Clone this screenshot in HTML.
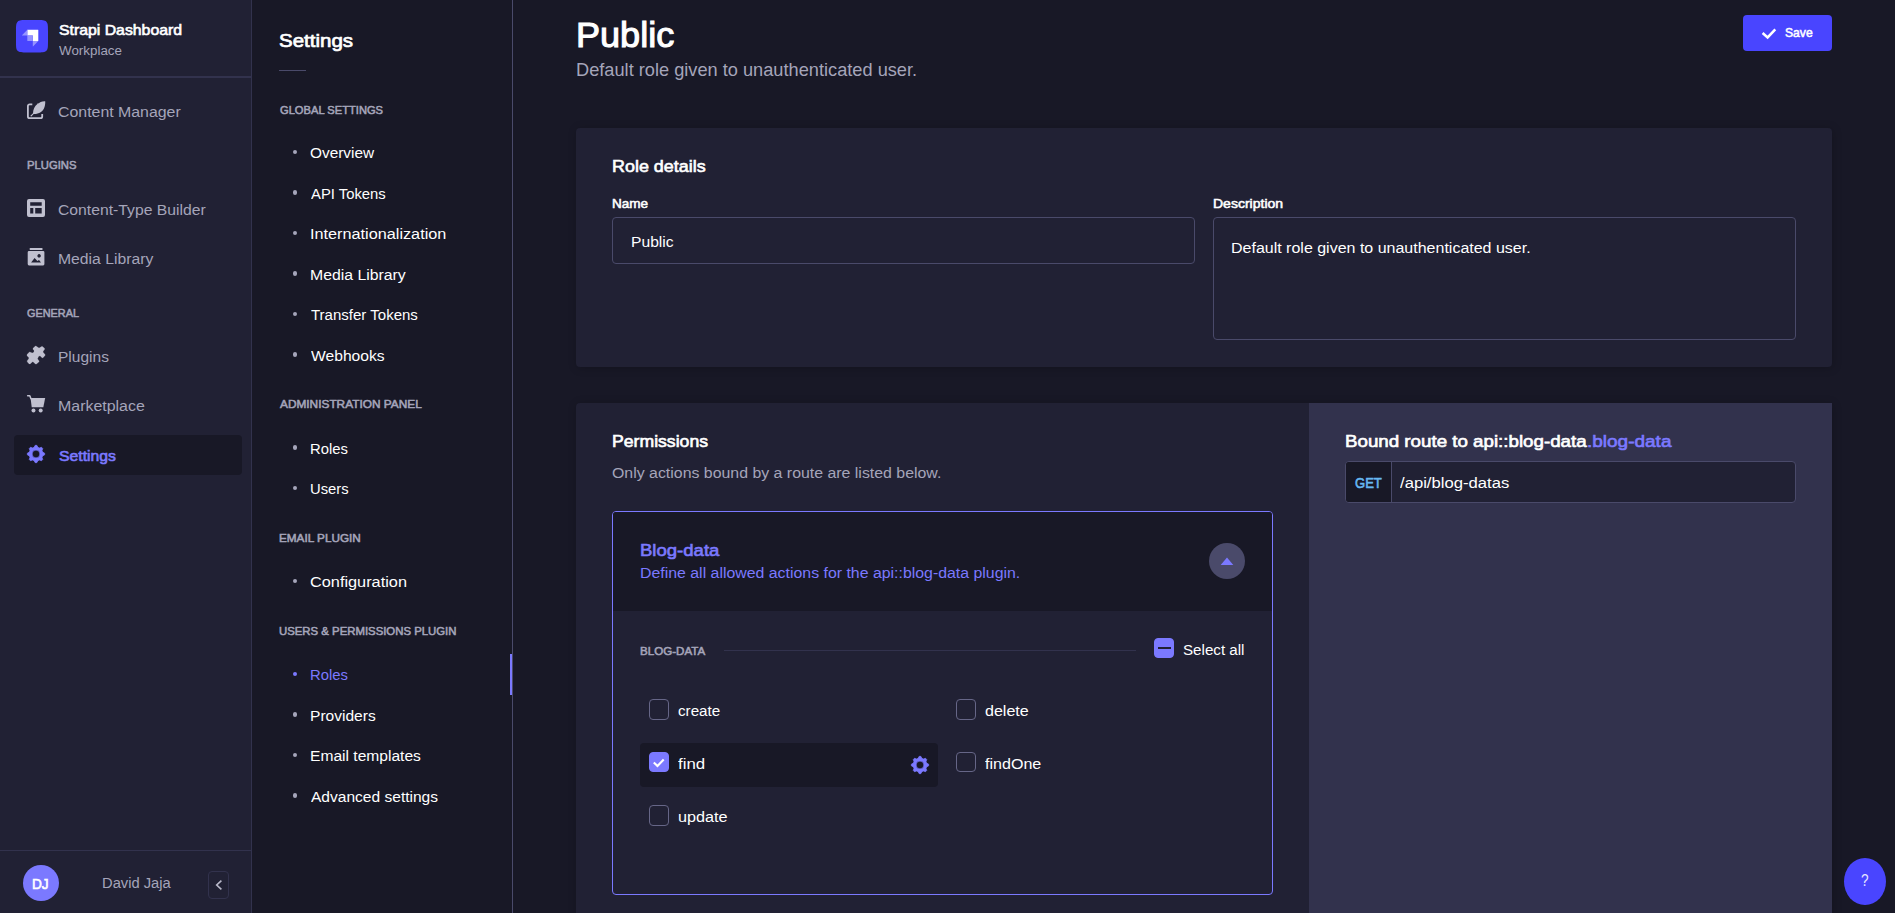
<!DOCTYPE html>
<html lang="en">
<head>
<meta charset="utf-8">
<title>Strapi Dashboard - Roles</title>
<style>
*{box-sizing:border-box;margin:0;padding:0}
html,body{width:1895px;height:913px;overflow:hidden;background:#181826}
body{position:relative;font-family:"Liberation Sans", sans-serif;color:#fff;-webkit-font-smoothing:antialiased}
ul{list-style:none}
.t{position:absolute;white-space:nowrap;line-height:1;display:block;transform-origin:0 0}
.ic{position:absolute;display:block;overflow:visible}
.mainnav,.subnav{position:absolute;left:0;top:0;width:0;height:0}
.navbg{position:absolute;left:0;top:0;width:252px;height:913px;background:#212134;border-right:1px solid #32324d}
.subbg{position:absolute;left:252px;top:0;width:261px;height:913px;background:#181826;border-right:1px solid #4a4a6a}
main{position:absolute;left:0;top:0;width:0;height:0}
.hr{position:absolute;height:1px;background:#32324d}
.hr2{position:absolute;height:1px;background:#4a4a6a}
.hr3{position:absolute;height:1px;background:#32324d}
.active-bg{position:absolute;background:#181826;border-radius:4px}
.avatar{position:absolute;border-radius:50%;background:#7b79ff}
.collapse{position:absolute;border:1px solid #32324d;border-radius:4px;background:#212134}
.dot{position:absolute;width:4.600px;height:4.600px;border-radius:50%}
.activebar{position:absolute;background:#7b79ff}
.btn{position:absolute;background:#4945ff;border-radius:4px}
.card{position:absolute;background:#212134;border-radius:4px;box-shadow:1px 1px 10px rgba(3,3,5,.2)}
.rightpanel{position:absolute;background:#32324d}
.input{position:absolute;border:1px solid #4a4a6a;border-radius:4px;background:#212134}
.acc{position:absolute;border:1px solid #7b79ff;border-radius:4px;background:#212134;overflow:hidden}
.acchead{position:absolute;left:0;top:0;right:0;height:98.500px;background:#181826}
.toggle{position:absolute;border-radius:50%;background:#4a4a6a}
.cb{position:absolute;width:20px;height:21px;border:1px solid #666687;border-radius:4px;background:#212134}
.cb.on{background:#7b79ff;border-color:#7b79ff}
.dash{position:absolute;background:#212134}
.rowbg{position:absolute;background:#181826;border-radius:4px}
.route{position:absolute;border:1px solid #4a4a6a;border-radius:4px;background:#212134;overflow:hidden}
.verb{position:absolute;left:0;top:0;bottom:0;width:46px;background:#181826;border-right:1px solid #4a4a6a}
.help{position:absolute;border-radius:50%;background:#4945ff}
</style>
</head>
<body>
<nav class="mainnav"><div class="navbg"></div>
<div class="brand">
<svg class="ic" style="left:16px;top:20.400px" width="32" height="32.500" viewBox="39 32 721 721" preserveAspectRatio="none"><path d="M39 282c0-118 0-176.900 36.600-213.500C112.200 32 171.100 32 288.900 32h221.200c117.800 0 176.700 0 213.300 36.600C760 105.200 760 164.100 760 281.900v221.200c0 117.800 0 176.700-36.600 213.300C686.800 753 627.900 753 510.100 753H288.900c-117.800 0-176.700 0-213.300-36.600C39 679.800 39 620.900 39 503.100V281.900Z" fill="#4945ff"/><path d="M536.400 250.700H293.700v123.800h123.800v123.700h123.800V255.500a4.800 4.800 0 0 0-4.900-4.800Z" fill="#fff"/><path d="M293.800 374.500h119c2.600 0 4.800 2.100 4.800 4.800v119h-119a4.800 4.800 0 0 1-4.800-4.900v-119Z" fill="#9593ff"/><path d="M417.500 498.200h123.800L421.600 618a2.400 2.400 0 0 1-4.100-1.700v-118ZM293.800 374.500h-118a2.400 2.400 0 0 1-1.700-4.100l119.700-119.700v123.800Z" fill="#9593ff"/></svg>
<span class="t" style="left:58.81px;top:22.59px;font-size:14.77px;color:#fff;-webkit-text-stroke:0.62px #fff;transform:scaleX(1.071);">Strapi Dashboard</span>
<span class="t" style="left:58.94px;top:43.90px;font-size:13.23px;color:#a5a5ba;transform:scaleX(1.012);">Workplace</span>
</div>
<div class="hr" style="left:0;top:76px;width:251px;height:2px"></div>
<ul class="navlist">
<li><svg class="ic" style="left:27px;top:101px" width="19" height="18" viewBox="0 0 19 18"><path d="M5.300 3.300H2.600A1.700 1.700 0 0 0 .9 5v10.400a1.700 1.700 0 0 0 1.700 1.700h10.900a1.700 1.700 0 0 0 1.700-1.700v-2.300" fill="none" stroke="#c0c0cf" stroke-width="1.8" stroke-linecap="butt"/><path d="M18.2 .3C14.5 .2 12.6 1.2 11.6 2.6L10.9 2 10.4 2.9C7.6 4.8 6.1 8.3 6 12.2L3.6 14.6c-.5.5.3 1.300.8.800L6.700 13.100C11.500 13.300 16.200 10.800 17.600 5.800 18.200 3.800 18.300 2 18.200.300Z" fill="#c0c0cf"/></svg><span class="t" style="left:58.29px;top:104.03px;font-size:15.44px;color:#a5a5ba;transform:scaleX(1.029);">Content Manager</span></li>
<li class="lbl"><span class="t" style="left:26.94px;top:160.34px;font-size:11.53px;color:#a5a5ba;-webkit-text-stroke:0.55px #a5a5ba;transform:scaleX(0.979);">PLUGINS</span></li>
<li><svg class="ic" style="left:27px;top:199px" width="18" height="18" viewBox="0 0 18 18" ><path fill-rule="evenodd" fill="#c0c0cf" d="M2 0h14a2 2 0 0 1 2 2v14a2 2 0 0 1-2 2H2a2 2 0 0 1-2-2V2a2 2 0 0 1 2-2ZM3.200 3.300v3.500h11.500V3.300Z M3.200 9.100v5.500h3.100V9.100Z M8.200 9.100v5.500h6.500V9.100Z"/></svg><span class="t" style="left:58.30px;top:202.03px;font-size:15.44px;color:#a5a5ba;transform:scaleX(1.019);">Content-Type Builder</span></li>
<li><svg class="ic" style="left:27px;top:248px" width="18" height="18" viewBox="0 0 18 18" ><rect x="2.700" y="0" width="12.800" height="2" rx=".6" fill="#c0c0cf"/><path fill-rule="evenodd" fill="#c0c0cf" d="M2 3h14.100a1.300 1.300 0 0 1 1.300 1.300v11.800a1.300 1.300 0 0 1-1.300 1.300H2a1.300 1.300 0 0 1-1.300-1.300V4.300A1.300 1.300 0 0 1 2 3ZM12.100 6.100a1.700 1.700 0 1 0 .01 0Z M4.100 14.600 7.600 10 10.400 13.100 12 12.100 14 14.600Z"/></svg><span class="t" style="left:57.81px;top:251.03px;font-size:15.44px;color:#a5a5ba;transform:scaleX(1.019);">Media Library</span></li>
<li class="lbl"><span class="t" style="left:27.31px;top:308.34px;font-size:11.53px;color:#a5a5ba;-webkit-text-stroke:0.55px #a5a5ba;transform:scaleX(0.945);">GENERAL</span></li>
<li><svg class="ic" style="left:27px;top:346px" width="19" height="19" viewBox="0 0 19 19" ><path d="M8.95 0.01 L11.58 1.76 L12.10 1.94 L15.08 0.36 L17.54 2.29 L17.54 3.52 L16.13 5.27 L16.13 6.32 L18.06 8.42 L18.06 9.47 L15.78 11.93 L14.73 11.58 L12.98 9.82 L11.58 10.53 L10.53 12.63 L12.10 15.08 L12.10 15.78 L9.47 18.06 L8.42 18.06 L5.97 15.78 L5.27 15.96 L3.16 17.89 L2.11 17.89 L0.19 15.78 L0.19 14.73 L1.76 12.63 L1.76 11.58 L0.01 9.82 L0.01 8.42 L2.46 5.97 L3.52 6.32 L5.27 7.02 L7.02 5.97 L7.02 4.57 L5.97 3.16 L5.97 2.29 L8.42 0.01Z" fill="#c0c0cf" stroke="#c0c0cf" stroke-width=".2" stroke-linejoin="round"/></svg><span class="t" style="left:57.83px;top:349.03px;font-size:15.44px;color:#a5a5ba;transform:scaleX(1.005);">Plugins</span></li>
<li><svg class="ic" style="left:27px;top:395px" width="19" height="19" viewBox="0 0 19 19" ><path d="M0.64 0.64 L2.81 0.64 L3.87 3.52" fill="none" stroke="#c0c0cf" stroke-width="1.500" stroke-linecap="round" stroke-linejoin="round"/><path d="M3.52 2.99 L18.17 2.99 L16.31 12.21 L4.74 12.21Z" fill="#c0c0cf"/><circle cx="6.49" cy="15.61" r="2" fill="#c0c0cf"/><circle cx="13.68" cy="15.61" r="2" fill="#c0c0cf"/></svg><span class="t" style="left:57.79px;top:398.03px;font-size:15.44px;color:#a5a5ba;transform:scaleX(1.032);">Marketplace</span></li>
<li><div class="active-bg" style="left:14px;top:435px;width:228px;height:40px"></div><svg class="ic" style="left:27px;top:445px" width="18" height="18" viewBox="0 0 18 18" ><path fill-rule="evenodd" d="M7.07 2.37 L8.18 0.34 L9.82 0.34 L10.93 2.37 L12.32 2.95 L14.55 2.30 L15.70 3.45 L15.05 5.68 L15.63 7.07 L17.66 8.18 L17.66 9.82 L15.63 10.93 L15.05 12.32 L15.70 14.55 L14.55 15.70 L12.32 15.05 L10.93 15.63 L9.82 17.66 L8.18 17.66 L7.07 15.63 L5.68 15.05 L3.45 15.70 L2.30 14.55 L2.95 12.32 L2.37 10.93 L0.34 9.82 L0.34 8.18 L2.37 7.07 L2.95 5.68 L2.30 3.45 L3.45 2.30 L5.68 2.95Z M12.90 9.00 A3.9 3.9 0 1 0 5.10 9.00 A3.9 3.9 0 1 0 12.90 9.00Z" fill="#7b79ff" stroke="#7b79ff" stroke-width=".7" stroke-linejoin="round"/></svg><span class="t" style="left:58.72px;top:448.59px;font-size:14.77px;color:#7b79ff;-webkit-text-stroke:0.62px #7b79ff;transform:scaleX(1.067);">Settings</span></li>
</ul>
<div class="hr" style="left:0;top:850px;width:251px"></div>
<div class="avatar" style="left:23px;top:865px;width:36px;height:36px"></div>
<span class="t" style="left:31.97px;top:877.03px;font-size:14.26px;color:#fff;-webkit-text-stroke:0.60px #fff;transform:scaleX(0.956);">DJ</span>
<span class="t" style="left:101.99px;top:875.03px;font-size:15.44px;color:#a5a5ba;transform:scaleX(0.954);">David Jaja</span>
<div class="collapse" style="left:208px;top:871px;width:21px;height:28px"></div>
<svg class="ic" style="left:214px;top:879px" width="10" height="12" viewBox="0 0 10 12" ><path d="M7.400 1.700 2.700 6 7.400 10.300" fill="none" stroke="#b9b9ca" stroke-width="1.600" stroke-linecap="butt" stroke-linejoin="miter"/></svg>
</nav>
<aside class="subnav"><div class="subbg"></div>
<span class="t" style="left:279.36px;top:30.95px;font-size:19.08px;color:#fff;-webkit-text-stroke:0.72px #fff;transform:scaleX(1.074);">Settings</span>
<div class="hr2" style="left:279px;top:70px;width:27px"></div>
<span class="t" style="left:279.51px;top:105.34px;font-size:11.53px;color:#a5a5ba;-webkit-text-stroke:0.55px #a5a5ba;transform:scaleX(0.968);">GLOBAL SETTINGS</span>
<span class="dot" style="left:292.8px;top:149.7px;background:#a5a5ba"></span>
<span class="t" style="left:310.47px;top:145.03px;font-size:15.44px;color:#fff;transform:scaleX(0.996);">Overview</span>
<span class="dot" style="left:292.8px;top:190.3px;background:#a5a5ba"></span>
<span class="t" style="left:311.17px;top:186.03px;font-size:15.44px;color:#fff;transform:scaleX(0.960);">API Tokens</span>
<span class="dot" style="left:292.8px;top:230.8px;background:#a5a5ba"></span>
<span class="t" style="left:309.70px;top:226.03px;font-size:15.44px;color:#fff;transform:scaleX(1.052);">Internationalization</span>
<span class="dot" style="left:292.8px;top:271.3px;background:#a5a5ba"></span>
<span class="t" style="left:309.90px;top:267.03px;font-size:15.44px;color:#fff;transform:scaleX(1.024);">Media Library</span>
<span class="dot" style="left:292.8px;top:311.8px;background:#a5a5ba"></span>
<span class="t" style="left:310.86px;top:307.03px;font-size:15.44px;color:#fff;transform:scaleX(0.973);">Transfer Tokens</span>
<span class="dot" style="left:292.8px;top:352.3px;background:#a5a5ba"></span>
<span class="t" style="left:311.13px;top:348.03px;font-size:15.44px;color:#fff;transform:scaleX(1.014);">Webhooks</span>
<span class="t" style="left:280.06px;top:399.34px;font-size:11.53px;color:#a5a5ba;-webkit-text-stroke:0.55px #a5a5ba;transform:scaleX(1.029);">ADMINISTRATION PANEL</span>
<span class="dot" style="left:292.8px;top:445.3px;background:#a5a5ba"></span>
<span class="t" style="left:309.98px;top:441.03px;font-size:15.44px;color:#fff;transform:scaleX(0.960);">Roles</span>
<span class="dot" style="left:292.8px;top:485.8px;background:#a5a5ba"></span>
<span class="t" style="left:310.06px;top:481.03px;font-size:15.44px;color:#fff;transform:scaleX(0.958);">Users</span>
<span class="t" style="left:279.12px;top:533.34px;font-size:11.53px;color:#a5a5ba;-webkit-text-stroke:0.55px #a5a5ba;transform:scaleX(1.020);">EMAIL PLUGIN</span>
<span class="dot" style="left:292.8px;top:578.8px;background:#a5a5ba"></span>
<span class="t" style="left:310.37px;top:574.03px;font-size:15.44px;color:#fff;transform:scaleX(1.056);">Configuration</span>
<span class="t" style="left:279.20px;top:626.34px;font-size:11.53px;color:#a5a5ba;-webkit-text-stroke:0.55px #a5a5ba;transform:scaleX(0.987);">USERS &amp; PERMISSIONS PLUGIN</span>
<span class="dot" style="left:292.8px;top:671.8px;background:#7b79ff"></span>
<span class="t" style="left:309.98px;top:667.03px;font-size:15.44px;color:#7b79ff;transform:scaleX(0.960);">Roles</span>
<span class="dot" style="left:292.8px;top:712.3px;background:#a5a5ba"></span>
<span class="t" style="left:309.92px;top:708.03px;font-size:15.44px;color:#fff;transform:scaleX(1.008);">Providers</span>
<span class="dot" style="left:292.8px;top:752.8px;background:#a5a5ba"></span>
<span class="t" style="left:309.92px;top:748.03px;font-size:15.44px;color:#fff;transform:scaleX(1.010);">Email templates</span>
<span class="dot" style="left:292.8px;top:793.3px;background:#a5a5ba"></span>
<span class="t" style="left:311.17px;top:789.03px;font-size:15.44px;color:#fff;transform:scaleX(1.007);">Advanced settings</span>
<div class="activebar" style="left:510px;top:654px;width:2px;height:41px"></div>
</aside>
<main>
<span class="t" style="left:576.28px;top:17.18px;font-size:35.34px;color:#fff;-webkit-text-stroke:1.06px #fff;transform:scaleX(1.021);">Public</span>
<span class="t" style="left:576.21px;top:62.17px;font-size:17.64px;color:#a5a5ba;transform:scaleX(1.033);">Default role given to unauthenticated user.</span>
<div class="btn" style="left:1743px;top:15px;width:89px;height:36px"></div>
<svg class="ic" style="left:1760px;top:26px" width="18" height="14" viewBox="0 0 18 14" ><path d="M2.600 7 7.600 11.400 15.300 3.300" fill="none" stroke="#fff" stroke-width="2.500"/></svg>
<span class="t" style="left:1784.90px;top:27.38px;font-size:12.66px;color:#fff;-webkit-text-stroke:0.53px #fff;transform:scaleX(0.960);">Save</span>
<section class="card" style="left:576px;top:128px;width:1256px;height:238.500px"></section>
<span class="t" style="left:612.37px;top:158.75px;font-size:16.96px;color:#fff;-webkit-text-stroke:0.64px #fff;transform:scaleX(1.058);">Role details</span>
<span class="t" style="left:612.07px;top:198.38px;font-size:12.66px;color:#fff;-webkit-text-stroke:0.53px #fff;transform:scaleX(1.071);">Name</span>
<div class="input" style="left:612px;top:217px;width:583px;height:47px"></div>
<span class="t" style="left:630.72px;top:234.03px;font-size:15.44px;color:#fff;transform:scaleX(1.014);">Public</span>
<span class="t" style="left:1213.04px;top:198.38px;font-size:12.66px;color:#fff;-webkit-text-stroke:0.53px #fff;transform:scaleX(1.107);">Description</span>
<div class="input" style="left:1213px;top:217px;width:583px;height:123px"></div>
<span class="t" style="left:1231.19px;top:240.03px;font-size:15.44px;color:#fff;transform:scaleX(1.036);">Default role given to unauthenticated user.</span>
<section class="card" style="left:576px;top:403px;width:1256px;height:520px;border-radius:4px 4px 0 0"></section>
<div class="rightpanel" style="left:1309px;top:403px;width:523px;height:520px"></div>
<span class="t" style="left:611.69px;top:433.75px;font-size:16.96px;color:#fff;-webkit-text-stroke:0.64px #fff;transform:scaleX(1.041);">Permissions</span>
<span class="t" style="left:611.85px;top:465.03px;font-size:15.44px;color:#a5a5ba;transform:scaleX(1.029);">Only actions bound by a route are listed below.</span>
<div class="acc" style="left:612px;top:511px;width:661px;height:383.500px"><div class="acchead"></div></div>
<span class="t" style="left:639.83px;top:542.75px;font-size:16.96px;color:#7b79ff;-webkit-text-stroke:0.64px #7b79ff;transform:scaleX(1.095);">Blog-data</span>
<span class="t" style="left:640.10px;top:565.03px;font-size:15.44px;color:#7b79ff;transform:scaleX(1.028);">Define all allowed actions for the api::blog-data plugin.</span>
<div class="toggle" style="left:1209px;top:543px;width:36px;height:36px"></div>
<svg class="ic" style="left:1220px;top:557px" width="14" height="9" viewBox="0 0 14 9" ><path d="M.7 8 7 .6 13.300 8Z" fill="#7b79ff"/></svg>
<span class="t" style="left:640.23px;top:646.34px;font-size:11.53px;color:#a5a5ba;-webkit-text-stroke:0.55px #a5a5ba;transform:scaleX(1.006);">BLOG-DATA</span>
<div class="hr3" style="left:724px;top:650px;width:412px"></div>
<div class="cb on" style="left:1154px;top:638px;height:20px"></div>
<div class="dash" style="left:1158px;top:646.500px;width:12.500px;height:2.600px"></div>
<span class="t" style="left:1182.91px;top:642.03px;font-size:15.44px;color:#fff;transform:scaleX(0.981);">Select all</span>
<div class="cb" style="left:649px;top:699px"></div>
<span class="t" style="left:678.05px;top:703.03px;font-size:15.44px;color:#fff;transform:scaleX(0.985);">create</span>
<div class="cb" style="left:956px;top:699px"></div>
<span class="t" style="left:985.03px;top:703.03px;font-size:15.44px;color:#fff;transform:scaleX(1.040);">delete</span>
<div class="rowbg" style="left:640px;top:743px;width:298px;height:44px"></div>
<div class="cb on" style="left:649px;top:752px;height:20px"></div>
<svg class="ic" style="left:653px;top:757px" width="12" height="10" viewBox="0 0 12 10" ><path d="M.8 5.400 4.500 9 10.700 2.500" fill="none" stroke="#fff" stroke-width="2.100"/></svg>
<span class="t" style="left:678.46px;top:756.03px;font-size:15.44px;color:#fff;transform:scaleX(1.091);">find</span>
<svg class="ic" style="left:911px;top:756px" width="18" height="18" viewBox="0 0 18 18" ><path fill-rule="evenodd" d="M7.07 2.37 L8.18 0.34 L9.82 0.34 L10.93 2.37 L12.32 2.95 L14.55 2.30 L15.70 3.45 L15.05 5.68 L15.63 7.07 L17.66 8.18 L17.66 9.82 L15.63 10.93 L15.05 12.32 L15.70 14.55 L14.55 15.70 L12.32 15.05 L10.93 15.63 L9.82 17.66 L8.18 17.66 L7.07 15.63 L5.68 15.05 L3.45 15.70 L2.30 14.55 L2.95 12.32 L2.37 10.93 L0.34 9.82 L0.34 8.18 L2.37 7.07 L2.95 5.68 L2.30 3.45 L3.45 2.30 L5.68 2.95Z M12.90 9.00 A3.9 3.9 0 1 0 5.10 9.00 A3.9 3.9 0 1 0 12.90 9.00Z" fill="#7b79ff" stroke="#7b79ff" stroke-width=".7" stroke-linejoin="round"/></svg>
<div class="cb" style="left:956px;top:752px;height:20px"></div>
<span class="t" style="left:985.47px;top:756.03px;font-size:15.44px;color:#fff;transform:scaleX(1.041);">findOne</span>
<div class="cb" style="left:649px;top:805px"></div>
<span class="t" style="left:677.65px;top:809.03px;font-size:15.44px;color:#fff;transform:scaleX(1.051);">update</span>
<span class="t" style="left:1344.72px;top:433.75px;font-size:16.96px;color:#fff;-webkit-text-stroke:0.64px #fff;transform:scaleX(1.106);">Bound route to api::blog-data</span>
<span class="t" style="left:1586.83px;top:433.75px;font-size:16.96px;color:#7b79ff;-webkit-text-stroke:0.64px #7b79ff;transform:scaleX(1.121);">.blog-data</span>
<div class="route" style="left:1345px;top:461px;width:451px;height:42px"><div class="verb"></div></div>
<span class="t" style="left:1354.72px;top:475.59px;font-size:14.77px;color:#66b7f1;-webkit-text-stroke:0.62px #66b7f1;transform:scaleX(0.883);">GET</span>
<span class="t" style="left:1400.30px;top:475.03px;font-size:15.44px;color:#fff;transform:scaleX(1.079);">/api/blog-datas</span>
<div class="help" style="left:1843.800px;top:857.800px;width:42.400px;height:47.300px"></div>
<span class="t" style="left:1861.04px;top:872.41px;font-size:16.17px;color:#e4e4ff;transform:scaleX(0.842);">?</span>
</main>
</body>
</html>
